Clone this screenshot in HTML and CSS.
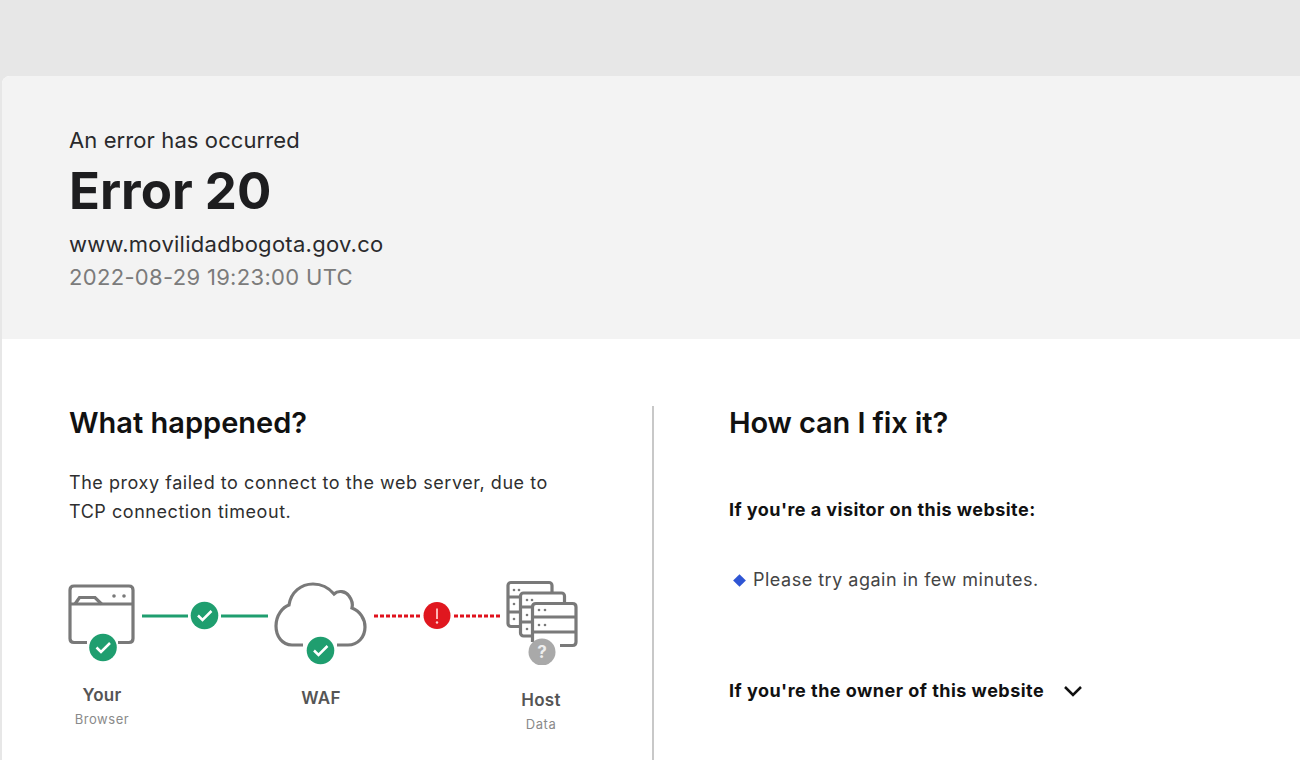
FILE: index.html
```html
<!DOCTYPE html>
<html lang="en">
<head>
<meta charset="utf-8">
<title>Error 20</title>
<link rel="stylesheet" href="styles.css">
</head>
<body>
<main class="card">
  <header class="hero">
    <p class="hero-kicker">An error has occurred</p>
    <h1 class="hero-title">Error 20</h1>
    <p class="hero-host">www.movilidadbogota.gov.co</p>
    <p class="hero-time">2022-08-29 19:23:00 UTC</p>
  </header>
  <section class="details">
    <div class="col col-left">
      <h2 class="col-title">What happened?</h2>
      <p class="col-text">The proxy failed to connect to the web server, due to TCP connection timeout.</p>
      <div class="diagram">
        <svg class="diagram-art" width="530" height="90" viewBox="60 575 530 90" fill="none">
          <g class="line-gray">
            <path d="M87 642.5H74Q70 642.5 70 638.5V590Q70 586 74 586H129Q133 586 133 590V638.5Q133 642.5 129 642.5H118"/>
            <path d="M70 604H133"/>
            <path d="M75 604L79.500 597.500H95L101.500 604"/>
            <path d="M303 645H292C282 645 276 636 276 626C276 615 283 607 289 605C291 592 301 584 313 584C322 584 329 588 334 594C338 590 346 591 349 596C352 600 353 604 352 608C360 611 365 619 365 627C365 637 358 645 348 645H337"/>
            <rect class="srv" x="508" y="582.500" width="44" height="44" rx="3"/>
            <path d="M508 597H552M508 612H552"/>
            <rect class="srv" x="520.500" y="593" width="44" height="43" rx="3"/>
            <path d="M520.500 607H564M520.500 622H564"/>
            <path class="srv" d="M532.500 642V607Q532.500 603.500 536 603.500H572.500Q576 603.500 576 607V642Q576 645.500 572.500 645.500H560"/>
            <path d="M532.500 617H576M532.500 632H576"/>
          </g>
          <g class="dots">
            <circle cx="114" cy="596" r="1.800"/><circle cx="124" cy="596" r="1.800"/>
            <circle cx="514" cy="590" r="1.300"/><circle cx="519" cy="590" r="1.300"/>
            <circle cx="514" cy="604" r="1.300"/><circle cx="514" cy="619" r="1.300"/>
            <circle cx="527" cy="600" r="1.300"/><circle cx="532" cy="600" r="1.300"/>
            <circle cx="527" cy="615" r="1.300"/><circle cx="527" cy="629" r="1.300"/>
            <circle cx="539" cy="610" r="1.300"/><circle cx="545" cy="610" r="1.300"/>
            <circle cx="539" cy="625" r="1.300"/><circle cx="545" cy="625" r="1.300"/>
          </g>
          <path class="line-green" d="M142 616H188M221 616H268"/>
          <path class="line-red" d="M374 616H420M454 616H500"/>
          <circle class="fill-green" cx="103" cy="647.500" r="13.800"/>
          <circle class="fill-green" cx="204.500" cy="615.500" r="13.800"/>
          <circle class="fill-green" cx="320.500" cy="650.500" r="13.800"/>
          <circle class="fill-red" cx="437" cy="615.500" r="13.500"/>
          <circle class="fill-gray" cx="542" cy="652" r="13.500"/>
          <path class="check" d="M96.500 647.500L101 652L110 643M198 615.500L202.500 620L211.500 611M314 650.500L318.500 655L327.500 646"/>
          <path class="bang" d="M437 608.500V619"/>
          <circle class="bang-dot" cx="437" cy="622.500" r="1.200"/>
          <text class="help" x="542" y="658" text-anchor="middle">?</text>
        </svg>
        <div class="node node-browser"><span class="node-name">Your</span><span class="node-sub">Browser</span></div>
        <div class="node node-waf"><span class="node-name">WAF</span></div>
        <div class="node node-host"><span class="node-name">Host</span><span class="node-sub">Data</span></div>
      </div>
    </div>
    <div class="col col-right">
      <h2 class="col-title col-title-tight">How can I fix it?</h2>
      <p class="fix-heading">If you're a visitor on this website:</p>
      <p class="fix-item"><span class="diamond"></span>Please try again in few minutes.</p>
      <p class="fix-owner">If you're the owner of this website
        <svg class="chevron" width="20" height="12" viewBox="0 0 20 12" fill="none"><path d="M2 2L10 10L18 2"/></svg>
      </p>
    </div>
  </section>
</main>
</body>
</html>
```
FILE: styles.css
```css
* { box-sizing: border-box; }
html, body { margin: 0; height: 760px; overflow: hidden; }
body {
  background: #e7e7e7;
  padding: 76px 0 0 2px;
  font-family: Inter, "Liberation Sans", sans-serif;
  color: #1d1d1f;
}
p, h1, h2 { margin: 0; }
.card {
  background: #fff;
  border-radius: 8px 0 0 0;
  overflow: hidden;
  height: 684px;
}
.hero {
  background: #f3f3f3;
  height: 263px;
  padding: 51px 0 0 67px;
}
.hero-kicker { font-size: 22px; line-height: 26px; letter-spacing: 0.1px; color: #2a2a2c; }
.hero-title { font-size: 51px; line-height: 60px; font-weight: 700; margin-top: 8px; color: #1d1d1f; }
.hero-host { font-size: 22px; line-height: 26px; letter-spacing: 0.27px; margin-top: 10px; color: #2a2a2c; }
.hero-time { font-size: 22px; line-height: 26px; letter-spacing: 0.32px; margin-top: 7px; color: #7b7b7b; }
.details {
  display: grid;
  grid-template-columns: 652px 1fr;
  padding-top: 67px;
}
.col { height: 354px; }
.col-left { border-right: 2px solid #c8c8c8; padding-left: 67px; }
.col-right { padding-left: 75px; }
.col-title { font-size: 29px; line-height: 34px; font-weight: 600; color: #111; }
.col-title-tight { letter-spacing: -0.12px; }
.col-text {
  width: 495px;
  font-size: 18px;
  line-height: 29px;
  letter-spacing: 0.55px;
  margin-top: 28px;
  color: #2f2f2f;
}
.diagram { position: relative; margin: 49px 0 0 -9px; width: 530px; height: 185px; }
.diagram-art { display: block; }
.line-gray path, .line-gray rect { stroke: #797979; stroke-width: 3.200; }
.srv { fill: #fff; }
.dots { fill: #797979; }
.line-green { stroke: #1f9e6f; stroke-width: 3; }
.line-red { stroke: #e0121d; stroke-width: 3; stroke-dasharray: 4 2; }
.fill-green { fill: #1f9e6f; }
.fill-red { fill: #e0171f; }
.fill-gray { fill: #a9a9a9; }
.check { stroke: #fff; stroke-width: 2.500; }
.bang { stroke: #ffb4b4; stroke-width: 2; }
.bang-dot { fill: #ffd0d0; }
.help { fill: #eee; font-size: 17px; font-weight: 700; font-family: Inter, sans-serif; }
.node {
  position: absolute;
  display: flex;
  flex-direction: column;
  align-items: center;
  width: 100px;
  color: #555;
}
.node-browser { left: -8px; top: 109px; }
.node-waf { left: 211px; top: 112px; }
.node-host { left: 431px; top: 114px; }
.node-name { font-size: 17px; line-height: 22px; font-weight: 600; letter-spacing: 0.3px; }
.node-sub { font-size: 13px; line-height: 16px; letter-spacing: 0.55px; margin-top: 5px; color: #8a8a8a; }
.fix-heading { font-size: 18px; line-height: 24px; letter-spacing: 0.45px; font-weight: 700; margin-top: 58px; color: #111; }
.fix-item {
  display: flex;
  align-items: center;
  font-size: 18px;
  line-height: 24px;
  letter-spacing: 0.5px;
  margin-top: 46px;
  color: #444;
}
.diamond { width: 9px; height: 9px; background: #2f55d4; transform: rotate(45deg); margin: 0 9px 0 6px; }
.fix-owner {
  display: flex;
  align-items: center;
  gap: 19px;
  font-size: 18px;
  line-height: 24px;
  letter-spacing: 0.48px;
  font-weight: 700;
  margin-top: 87px;
  color: #111;
}
.chevron path { stroke: #111; stroke-width: 2.500; }
```
